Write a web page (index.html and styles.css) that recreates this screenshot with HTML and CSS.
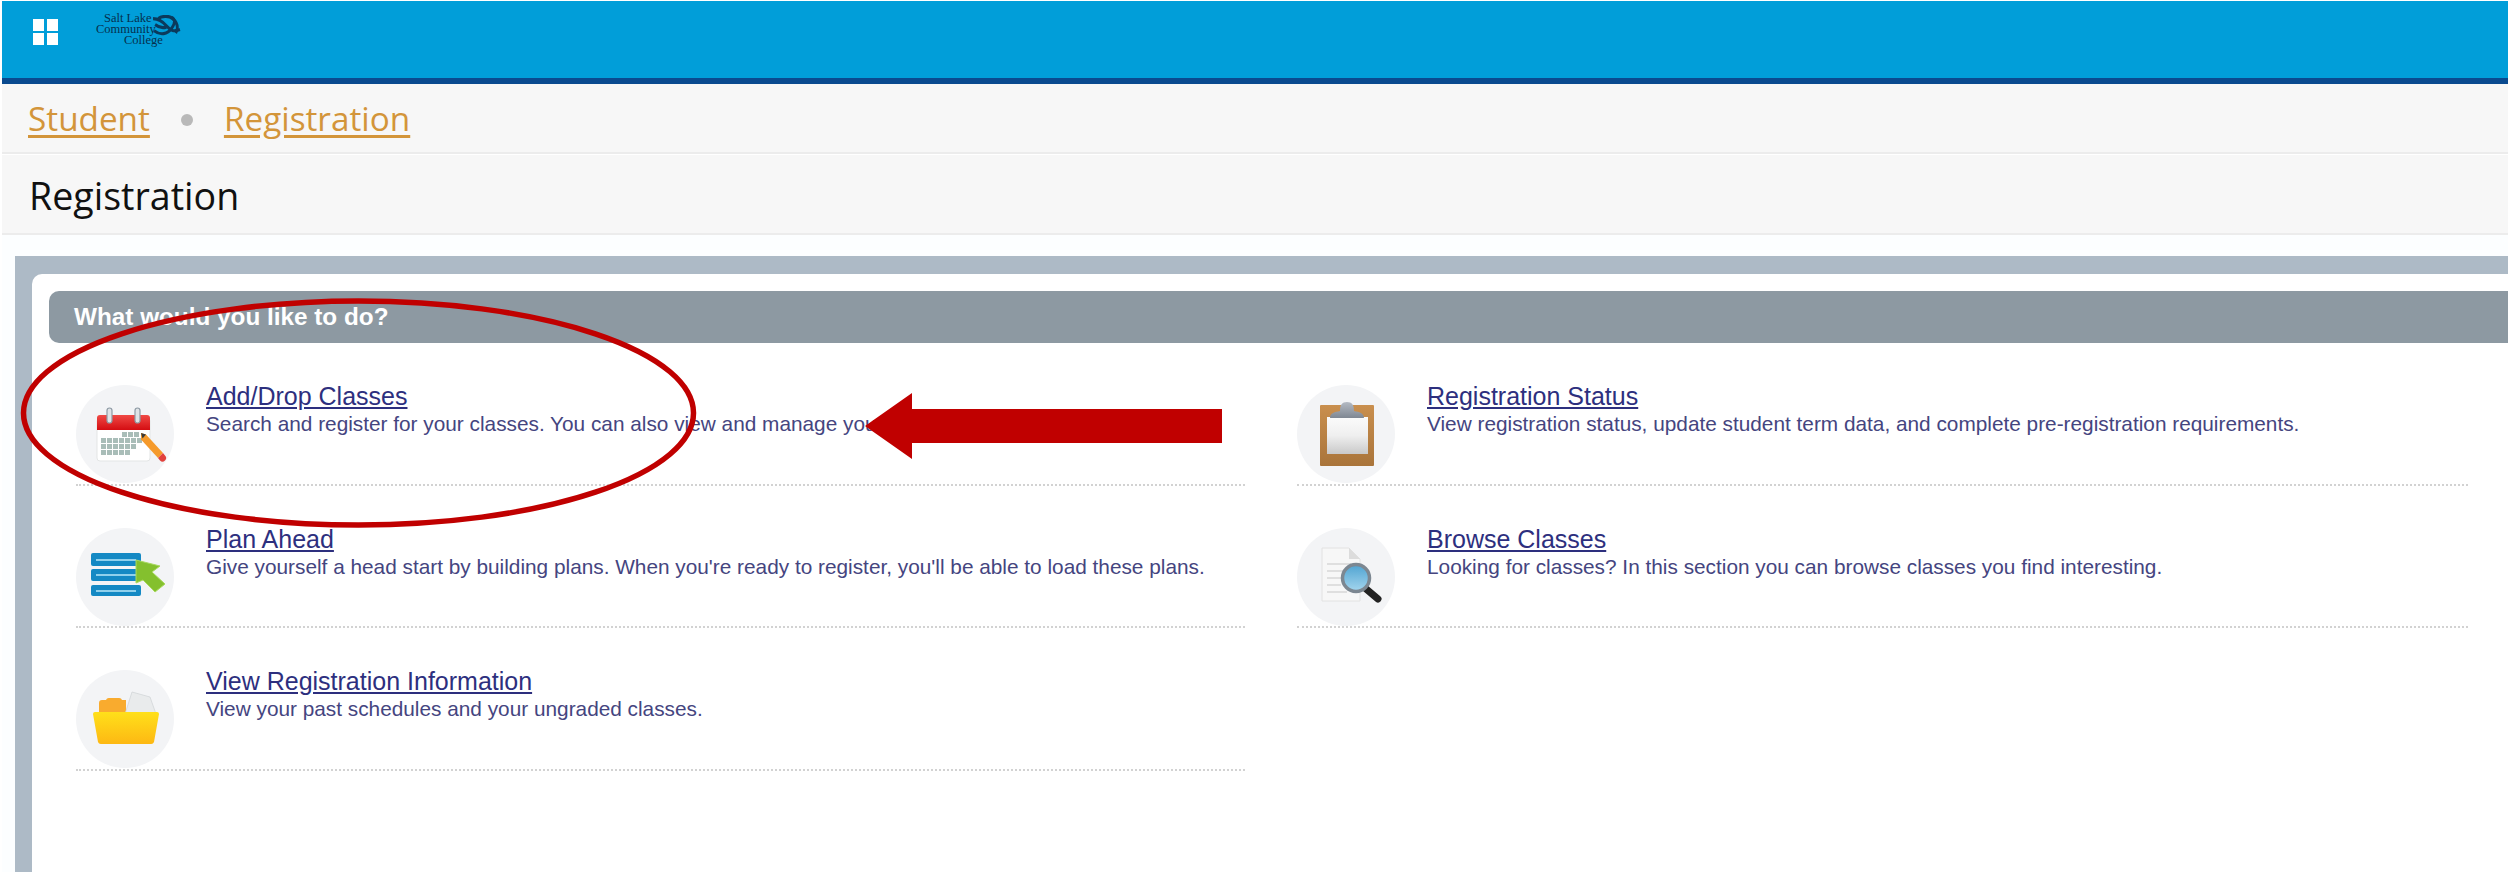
FILE: index.html
```html
<!DOCTYPE html>
<html lang="en" dir="ltr">
    <head>
        <meta charset="utf-8">
        <title>Registration</title>
        <link rel="stylesheet" href="styles.css">
    </head>

    <body>
        <div class="shot">
            <header class="topbar">
                <div class="apps"><span></span><span></span><span></span><span></span></div>
                <div class="logo">
                    <div class="logo-text">
                        <span class="logo-salt">Salt Lake</span>
                        <span class="logo-comm">Community</span>
                        <span class="logo-coll">College</span>
                    </div>
                    <svg class="logo-mark" viewBox="0 0 28 19" width="29" height="23" preserveAspectRatio="none">
                        <g fill="none" stroke="#0b3a5c" stroke-width="2.600">
                            <path d="M1 3c5 0 9 2 13 6s7 5 13 3"/>
                            <path d="M2 13c6 4 13 3 17-2s3-8 0-9"/>
                            <path d="M6 3c3-2 10-3 14 0s6 7 3 12"/>
                            <path d="M3 8c3 2 7 3 11 2"/>
                        </g>
                    </svg>
                </div>
            </header>

            <nav class="crumbs">
                <a href="#">Student</a>
                <span class="crumb-dot"></span>
                <a href="#">Registration</a>
            </nav>

            <div class="page-title">Registration</div>

            <main class="main">
                <div class="frame">
                    <section class="panel">
                        <h2 class="panel-head">What would you like to do?</h2>
                        <div class="tasks">
                            <div class="task">
                                <div class="task-icon">
                                    <svg viewBox="0 0 98 98" width="98" height="98">
                                        <defs>
                                            <linearGradient id="calRed" x1="0" y1="0" x2="0" y2="1"><stop offset="0" stop-color="#f04a45"/><stop offset="1" stop-color="#d40d12"/></linearGradient>
                                        </defs>
                                        <rect x="21" y="33" width="53" height="43" rx="3" fill="#fff" stroke="#e3e5e5"/>
                                        <path d="M21 45V33a3 3 0 0 1 3-3h47a3 3 0 0 1 3 3v12z" fill="url(#calRed)"/>
                                        <g fill="#dfe3e6" stroke="#8f9ba5" stroke-width="1.2">
                                            <rect x="31" y="23" width="5" height="15" rx="2.5"/>
                                            <rect x="59" y="23" width="5" height="15" rx="2.5"/>
                                        </g>
                                        <g fill="#a9bdb8">
                                            <rect x="46" y="47" width="5" height="5"/><rect x="52" y="47" width="5" height="5"/><rect x="58" y="47" width="5" height="5"/>
                                            <rect x="25" y="53" width="5" height="5"/><rect x="31" y="53" width="5" height="5"/><rect x="37" y="53" width="5" height="5"/><rect x="43" y="53" width="5" height="5"/><rect x="49" y="53" width="5" height="5"/><rect x="55" y="53" width="5" height="5"/><rect x="61" y="53" width="5" height="5"/>
                                            <rect x="25" y="59" width="5" height="5"/><rect x="31" y="59" width="5" height="5"/><rect x="37" y="59" width="5" height="5"/><rect x="43" y="59" width="5" height="5"/><rect x="49" y="59" width="5" height="5"/><rect x="55" y="59" width="5" height="5"/>
                                            <rect x="25" y="65" width="5" height="5"/><rect x="31" y="65" width="5" height="5"/><rect x="37" y="65" width="5" height="5"/><rect x="43" y="65" width="5" height="5"/><rect x="49" y="65" width="5" height="5"/>
                                        </g>
                                        <path d="M65 48l5 1.500 17 18.500-5 5-17-18.500z" fill="#f59a2c"/>
                                        <path d="M65 48l5 1.500-3.500 4z" fill="#3b3b3b"/>
                                        <path d="M82 73l5-5 2 2.500a3.500 3.500 0 0 1-5 5z" fill="#e2413c"/>
                                    </svg>
                                </div>
                                <div class="task-body">
                                    <a class="task-link" href="#">Add/Drop Classes</a>
                                    <p class="task-desc">Search and register for your classes. You can also view and manage your schedule.</p>
                                </div>
                            </div>

                            <div class="task">
                                <div class="task-icon">
                                    <svg viewBox="0 0 98 98" width="98" height="98">
                                        <g fill="#1489c4">
                                            <rect x="15" y="25" width="50" height="13" rx="2"/>
                                            <rect x="15" y="41" width="50" height="12" rx="2"/>
                                            <rect x="15" y="57" width="50" height="11" rx="2"/>
                                        </g>
                                        <g fill="#8fd0ec">
                                            <rect x="20" y="31" width="40" height="2"/>
                                            <rect x="20" y="46" width="40" height="2"/>
                                            <rect x="20" y="62" width="40" height="2"/>
                                        </g>
                                        <path d="M60 32l24 6-8 6 13 12-10 8-12-12-7 3z" fill="#84c02e" stroke="#a8d95f" stroke-width="1" stroke-linejoin="round"/>
                                    </svg>
                                </div>
                                <div class="task-body">
                                    <a class="task-link" href="#">Plan Ahead</a>
                                    <p class="task-desc">Give yourself a head start by building plans. When you're ready to register, you'll be able to load these plans.</p>
                                </div>
                            </div>

                            <div class="task">
                                <div class="task-icon">
                                    <svg viewBox="0 0 98 98" width="98" height="98">
                                        <defs>
                                            <linearGradient id="folderFront" x1="0" y1="0" x2="0" y2="1"><stop offset="0" stop-color="#ffe01a"/><stop offset="1" stop-color="#fdb813"/></linearGradient>
                                        </defs>
                                        <path d="M23 43v-10a3 3 0 0 1 3-3h4a3 3 0 0 1 3-2h10a3 3 0 0 1 3 2h4v13z" fill="#f9ab2e"/>
                                        <path d="M49 44l7-22 18 5 6 17z" fill="#e9ebec" stroke="#d2d5d8" stroke-width=".8"/>
                                        <path d="M19 42h62a2 2 0 0 1 2 2l-5 28a3 3 0 0 1-3 2H25a3 3 0 0 1-3-2l-5-28a2 2 0 0 1 2-2z" fill="url(#folderFront)"/>
                                    </svg>
                                </div>
                                <div class="task-body">
                                    <a class="task-link" href="#">View Registration Information</a>
                                    <p class="task-desc">View your past schedules and your ungraded classes.</p>
                                </div>
                            </div>

                            <div class="task task--right-1">
                                <div class="task-icon">
                                    <svg viewBox="0 0 98 98" width="98" height="98">
                                        <defs>
                                            <linearGradient id="clipPaper" x1="0" y1="0" x2="0" y2="1"><stop offset="0" stop-color="#fbfbfb"/><stop offset=".5" stop-color="#efefef"/><stop offset="1" stop-color="#c9c9c9"/></linearGradient>
                                            <linearGradient id="clipBoard" x1="0" y1="0" x2="0" y2="1"><stop offset="0" stop-color="#c98f4e"/><stop offset="1" stop-color="#a9743a"/></linearGradient>
                                            <linearGradient id="clipMetal" x1="0" y1="0" x2="0" y2="1"><stop offset="0" stop-color="#b4bac3"/><stop offset="1" stop-color="#7f8792"/></linearGradient>
                                        </defs>
                                        <rect x="23" y="20" width="54" height="61" rx="1" fill="url(#clipBoard)"/>
                                        <rect x="30" y="32" width="41" height="37" fill="url(#clipPaper)"/>
                                        <path d="M33 33c0-5 5-6 10-7 0-6 2-9 7-9s7 3 7 9c5 1 10 2 10 7z" fill="url(#clipMetal)"/>
                                    </svg>
                                </div>
                                <div class="task-body">
                                    <a class="task-link" href="#">Registration Status</a>
                                    <p class="task-desc">View registration status, update student term data, and complete pre-registration requirements.</p>
                                </div>
                            </div>

                            <div class="task task--right-2">
                                <div class="task-icon">
                                    <svg viewBox="0 0 98 98" width="98" height="98">
                                        <defs>
                                            <linearGradient id="lens" x1="0" y1="0" x2="0" y2="1"><stop offset="0" stop-color="#4fa3d1"/><stop offset="1" stop-color="#a5d6ee"/></linearGradient>
                                        </defs>
                                        <path d="M25 20h27l11 11v42H25z" fill="#f7f7f7" stroke="#e2e2e2"/>
                                        <path d="M52 20v11h11z" fill="#dcdcdc"/>
                                        <g stroke="#d7d7d7" stroke-width="1.500">
                                            <path d="M30 36h24M30 43h16M30 50h14M30 57h14M30 64h20"/>
                                        </g>
                                        <path d="M68 60l13 11" stroke="#222" stroke-width="7" stroke-linecap="round"/>
                                        <circle cx="59" cy="50" r="13.500" fill="url(#lens)" stroke="#7c8791" stroke-width="3.500"/>
                                    </svg>
                                </div>
                                <div class="task-body">
                                    <a class="task-link" href="#">Browse Classes</a>
                                    <p class="task-desc">Looking for classes? In this section you can browse classes you find interesting.</p>
                                </div>
                            </div>
                        </div>
                    </section>
                </div>
            </main>

            <svg class="marks" viewBox="0 0 2506 871" width="2506" height="871">
                <ellipse cx="356.500" cy="412" rx="335" ry="112" fill="none" stroke="#c00000" stroke-width="5.500"/>
                <polygon points="863,425 910,392 910,408 1220,408 1220,442 910,442 910,458" fill="#c00000"/>
            </svg>
        </div>
    </body>

</html>
```

FILE: styles.css
```css
html, body {
    margin: 0;
    background: #fff;
    font-family: "Liberation Sans", Arial, sans-serif;
}
.shot {
    position: relative;
    width: 2506px;
    height: 871px;
    margin: 1px 0 0 2px;
    overflow: hidden;
    background: #fcfeff;
}
.topbar {
    display: flex;
    align-items: flex-start;
    height: 77px;
    background: #019ed9;
    border-bottom: 6px solid #0a4a8f;
}
.apps {
    display: grid;
    grid-template-columns: 11px 11px;
    grid-auto-rows: 12px;
    gap: 2px 3px;
    margin: 18px 0 0 31px;
}
.apps span {
    background: #fff;
}
.logo {
    display: flex;
    align-items: flex-start;
    margin: 12px 0 0 38px;
    color: #06304e;
}
.logo-text {
    width: 66px;
    font-family: "Liberation Serif", serif;
    font-size: 12.5px;
    line-height: 11px;
}
.logo-text span {
    display: block;
    white-space: nowrap;
}
.logo-salt {
    padding-left: 8px;
}
.logo-coll {
    padding-left: 28px;
}
.logo-mark {
    margin: 2px 0 0 -10px;
}
.crumbs {
    display: flex;
    align-items: center;
    height: 68px;
    padding-left: 26px;
    background: #f7f7f7;
    border-bottom: 2px solid #ececec;
    font-family: "Open Sans", sans-serif;
    font-size: 33.300px;
}
.crumbs a {
    color: #d3953a;
    text-underline-offset: 4px;
}
.crumb-dot {
    width: 12px;
    height: 12px;
    margin: 4px 31px 0 31px;
    border-radius: 50%;
    background: #b9b9b9;
}
.page-title {
    display: flex;
    align-items: center;
    height: 81px;
    padding: 3px 0 0 27px;
    background: #f7f7f7;
    border-bottom: 2px solid #ececec;
    border-top: 1px solid #fff;
    box-sizing: border-box;
    font-family: "Open Sans", sans-serif;
    font-size: 37.600px;
    color: #111;
}
.main {
    padding: 21px 0 0 13px;
}
.frame {
    height: 616px;
    padding: 18px 0 0 17px;
    background: #adbac6;
}
.panel {
    height: 100%;
    padding: 17px 0 0 17px;
    box-sizing: border-box;
    background: #fff;
    border-radius: 10px 0 0 0;
}
.panel-head {
    height: 52px;
    margin: 0;
    padding-left: 25px;
    line-height: 52px;
    background: #8d99a2;
    border-radius: 10px 0 0 10px;
    color: #fff;
    font-size: 24.300px;
    font-weight: 700;
}
.tasks {
    display: grid;
    grid-template-columns: 1169px 1171px;
    grid-auto-rows: 142.5px;
    column-gap: 52px;
    padding-left: 27px;
}
.task {
    display: flex;
    gap: 32px;
    padding-top: 42px;
    box-sizing: border-box;
    border-bottom: 2px dotted #d2d2d2;
}
.task--right-1 {
    grid-column: 2;
    grid-row: 1;
}
.task--right-2 {
    grid-column: 2;
    grid-row: 2;
}
.task-icon {
    flex: none;
    width: 98px;
    height: 98px;
    border-radius: 50%;
    background: #f3f4f6;
}
.task-icon svg {
    display: block;
}
.task-link {
    display: block;
    width: fit-content;
    margin-top: -3px;
    color: #2d2f7e;
    font-size: 25px;
    line-height: 28px;
}
.task-desc {
    margin: 2px 0 0;
    color: #45457f;
    font-size: 20.800px;
    line-height: 24px;
}
.marks {
    position: absolute;
    top: 0;
    left: 0;
    pointer-events: none;
}
```
